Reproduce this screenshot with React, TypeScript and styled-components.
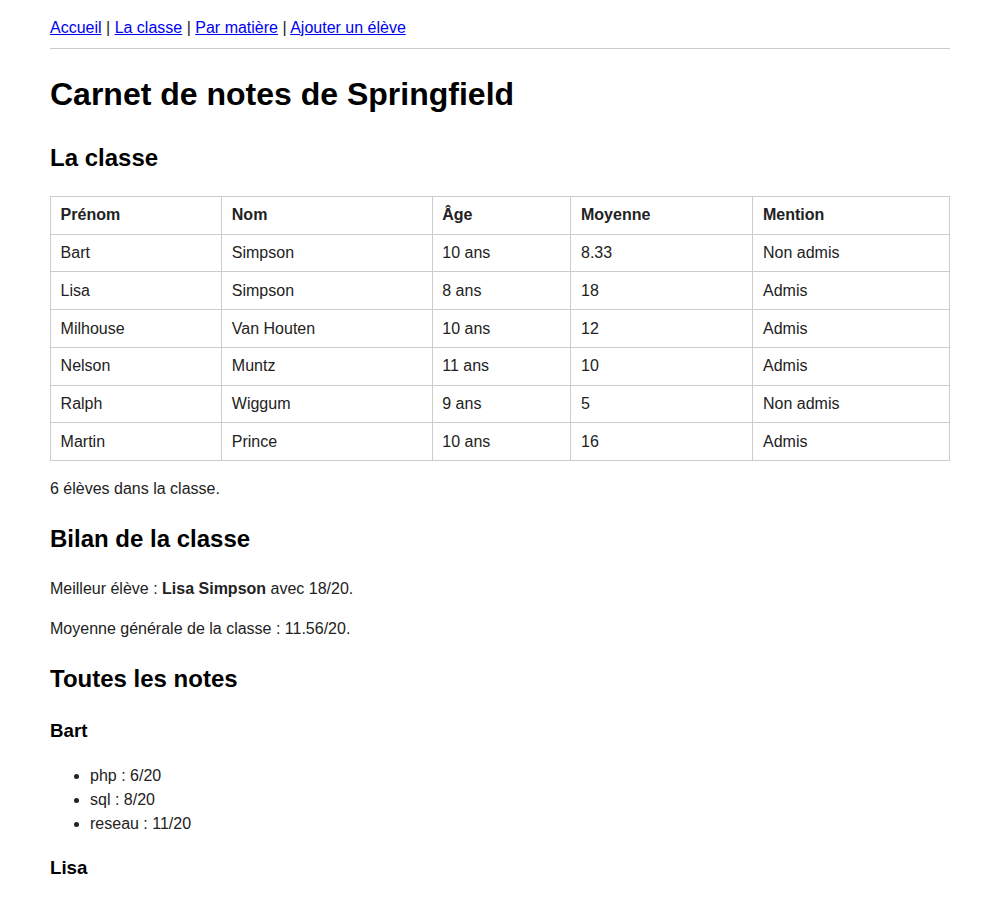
import React from "react";
import styled, { createGlobalStyle } from "styled-components";

const GlobalStyle = createGlobalStyle`
  html, body {
    margin: 0;
    padding: 0;
    background: #fff;
  }
  body {
    font-family: "Liberation Sans", Arial, sans-serif;
    font-size: 16px;
    line-height: 1.5;
    color: #222;
  }
`;

const Page = styled.div`
  max-width: 900px;
  margin: 0 auto;
  padding-top: 16px;
`;

const Nav = styled.nav`
  padding-bottom: 8px;
  border-bottom: 1px solid #ccc;
`;

const NavLink = styled.a`
  color: #0000ee;
  text-decoration: underline;
`;

const Title = styled.h1`
  font-size: 32px;
  font-weight: bold;
  color: #000;
  margin: 21.44px 0;
`;

const SectionTitle = styled.h2`
  font-size: 24px;
  font-weight: bold;
  color: #000;
  margin: 19.92px 0;
`;

const StudentTitle = styled.h3`
  font-size: 18.72px;
  font-weight: bold;
  color: #000;
  margin: 18.72px 0;
`;

const Table = styled.table`
  width: 100%;
  border-collapse: collapse;
  margin-bottom: 16px;
`;

const Th = styled.th`
  border: 1px solid #ccc;
  padding: 6.4px 9.6px;
  text-align: left;
  font-weight: bold;
`;

const Td = styled.td`
  border: 1px solid #ccc;
  padding: 6.4px 9.6px;
  text-align: left;
`;

const Para = styled.p`
  margin: 16px 0;
`;

const List = styled.ul`
  margin: 18.72px 0;
  padding-left: 40px;
`;

const students = [
  { prenom: "Bart", nom: "Simpson", age: "10 ans", moy: "8.33", mention: "Non admis" },
  { prenom: "Lisa", nom: "Simpson", age: "8 ans", moy: "18", mention: "Admis" },
  { prenom: "Milhouse", nom: "Van Houten", age: "10 ans", moy: "12", mention: "Admis" },
  { prenom: "Nelson", nom: "Muntz", age: "11 ans", moy: "10", mention: "Admis" },
  { prenom: "Ralph", nom: "Wiggum", age: "9 ans", moy: "5", mention: "Non admis" },
  { prenom: "Martin", nom: "Prince", age: "10 ans", moy: "16", mention: "Admis" },
];

export default function App() {
  return (
    <>
      <GlobalStyle />
      <Page>
        <Nav>
          <NavLink href="#">Accueil</NavLink> | <NavLink href="#">La classe</NavLink> |{" "}
          <NavLink href="#">Par matière</NavLink> | <NavLink href="#">Ajouter un élève</NavLink>
        </Nav>
        <Title>Carnet de notes de Springfield</Title>
        <SectionTitle>La classe</SectionTitle>
        <Table>
          <thead>
            <tr>
              <Th>Prénom</Th>
              <Th>Nom</Th>
              <Th>Âge</Th>
              <Th>Moyenne</Th>
              <Th>Mention</Th>
            </tr>
          </thead>
          <tbody>
            {students.map((s) => (
              <tr key={s.prenom}>
                <Td>{s.prenom}</Td>
                <Td>{s.nom}</Td>
                <Td>{s.age}</Td>
                <Td>{s.moy}</Td>
                <Td>{s.mention}</Td>
              </tr>
            ))}
          </tbody>
        </Table>
        <Para>6 élèves dans la classe.</Para>
        <SectionTitle>Bilan de la classe</SectionTitle>
        <Para>
          Meilleur élève : <strong>Lisa Simpson</strong> avec 18/20.
        </Para>
        <Para>Moyenne générale de la classe : 11.56/20.</Para>
        <SectionTitle>Toutes les notes</SectionTitle>
        <StudentTitle>Bart</StudentTitle>
        <List>
          <li>php : 6/20</li>
          <li>sql : 8/20</li>
          <li>reseau : 11/20</li>
        </List>
        <StudentTitle>Lisa</StudentTitle>
        <List>
          <li>php : 18/20</li>
          <li>sql : 17/20</li>
          <li>reseau : 19/20</li>
        </List>
      </Page>
    </>
  );
}
